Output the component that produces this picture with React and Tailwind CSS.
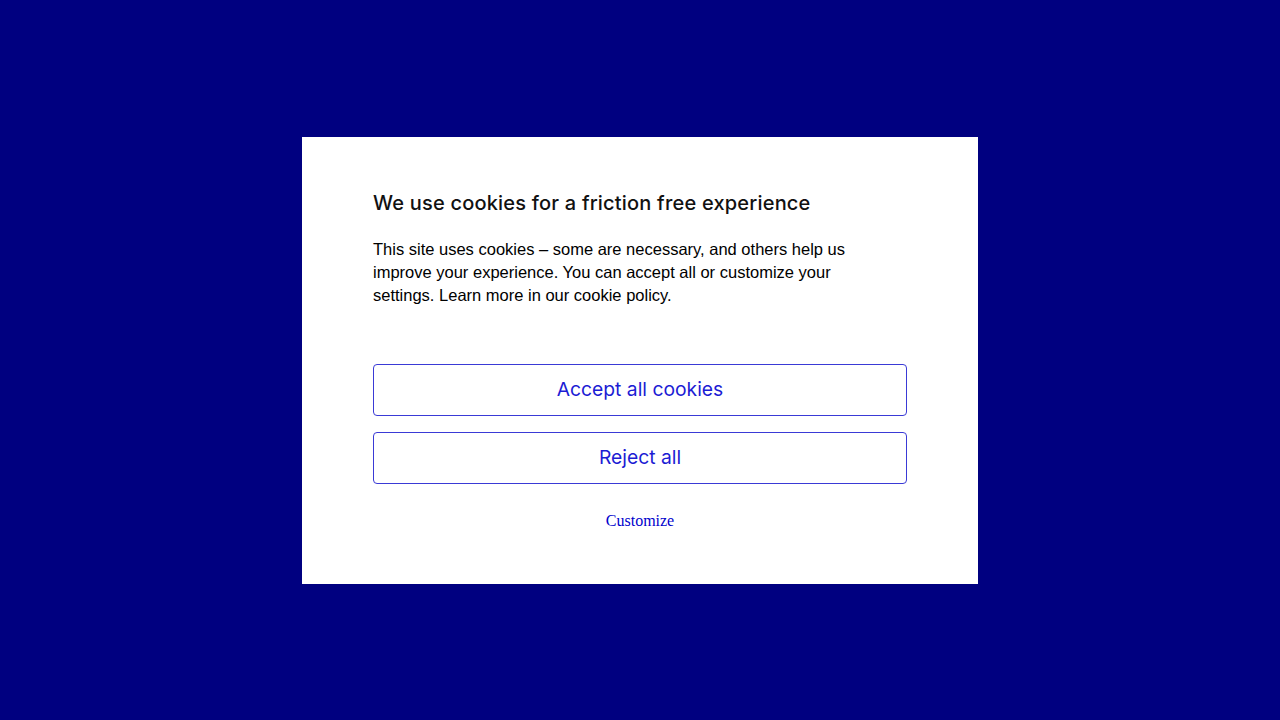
import React from 'react';

export default function App() {
  return (
    <div className="min-h-screen w-full bg-[#000080] flex items-center justify-center">
      <div className="w-[676px] h-[447px] bg-white px-[71px] pt-[52px]">
        <h2 className="text-[20px] leading-[28px] font-medium text-[#111] font-['Inter',sans-serif] tracking-[0.2px]">
          We use cookies for a friction free experience
        </h2>
        <p className="mt-[21px] max-w-[480px] text-[16.5px] leading-[23px] text-black font-['Liberation_Sans',Arial,sans-serif]">
          This site uses cookies – some are necessary, and others help us improve your experience. You can accept all or customize your settings. Learn more in our cookie policy.
        </p>
        <div className="mt-[57px] flex flex-col gap-4">
          <button className="h-[52px] w-full rounded-[4px] border border-[#3a3ad6] text-[19.3px] text-[#1c1cd4] font-['Inter',sans-serif]">
            Accept all cookies
          </button>
          <button className="h-[52px] w-full rounded-[4px] border border-[#3a3ad6] text-[19.3px] text-[#1c1cd4] font-['Inter',sans-serif]">
            Reject all
          </button>
        </div>
        <div className="mt-[24px] text-center">
          <button className="text-[16px] leading-5 text-[#0000cc] font-['Liberation_Serif',serif]">
            Customize
          </button>
        </div>
      </div>
    </div>
  );
}
